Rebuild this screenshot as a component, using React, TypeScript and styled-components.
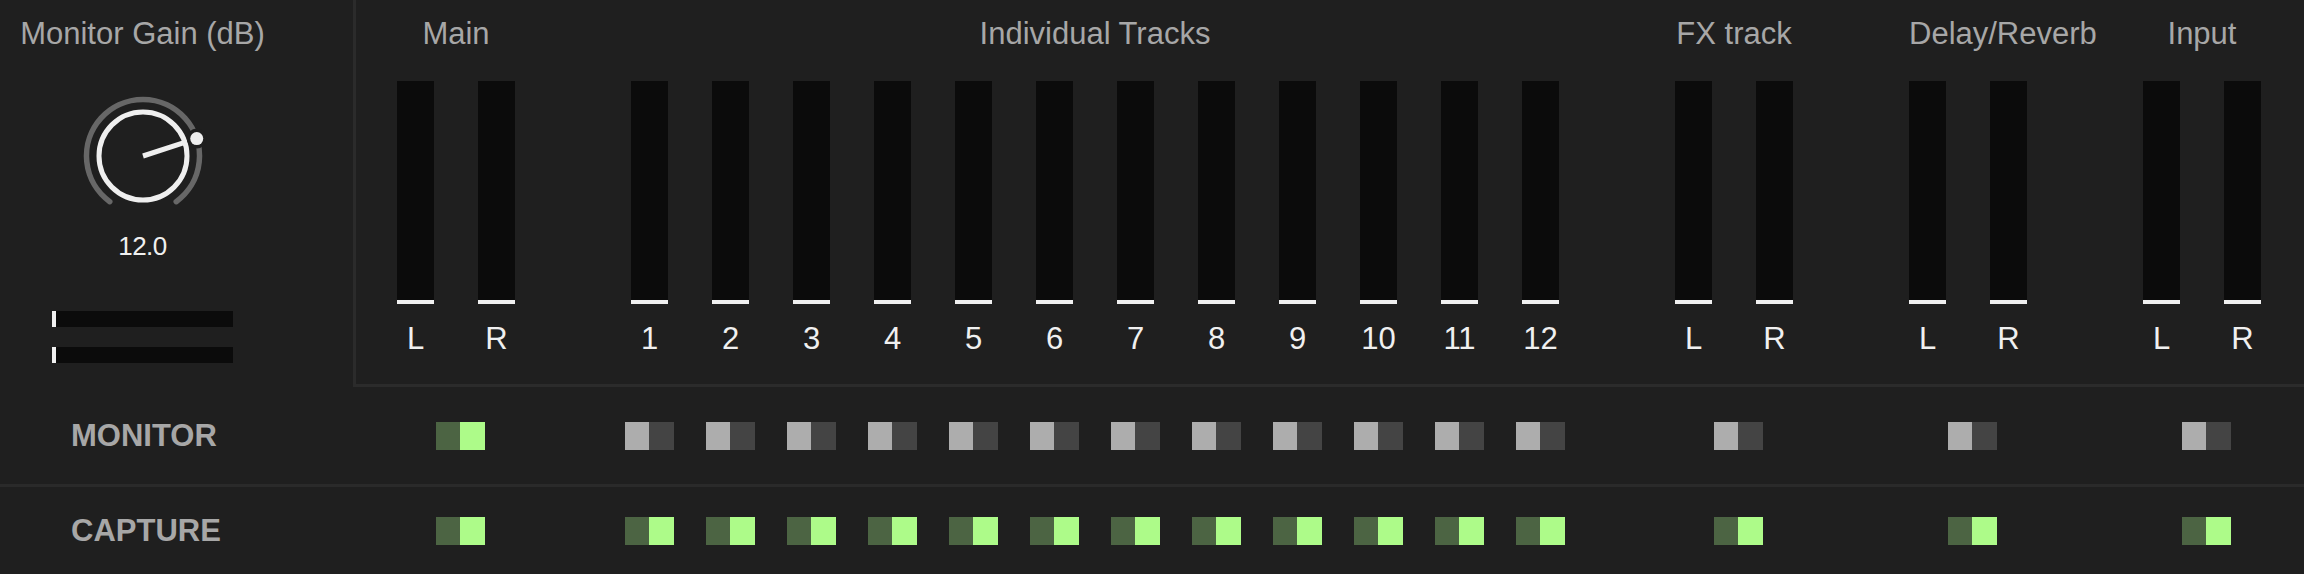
import React from 'react';
import styled, { createGlobalStyle } from 'styled-components';

const GlobalStyle = createGlobalStyle`
  html, body {
    margin: 0;
    padding: 0;
    background: #1f1f1f;
  }
  body {
    font-family: 'Liberation Sans', Arial, sans-serif;
    overflow: hidden;
  }
`;

const Page = styled.div`
  width: 2304px;
  height: 574px;
  display: flex;
  flex-direction: column;
  background: #1f1f1f;
`;

const Top = styled.div`
  display: flex;
  height: 387px;
  flex-shrink: 0;
`;

const LeftColumn = styled.div`
  width: 353px;
  padding: 16px 68px 0 0;
  box-sizing: border-box;
  display: flex;
  flex-direction: column;
  align-items: center;
`;

const Title = styled.div`
  font-size: 31px;
  line-height: 36px;
  color: #a7a7a7;
  white-space: nowrap;
`;

const KnobSvg = styled.svg`
  display: block;
  margin-top: 39px;
`;

const KnobValue = styled.div`
  margin-top: 11px;
  font-size: 26px;
  line-height: 29px;
  letter-spacing: -0.5px;
  color: #f0f0f0;
`;

const HMeters = styled.div`
  margin-top: 50px;
  display: flex;
  flex-direction: column;
  gap: 20px;
`;

const HMeter = styled.div`
  width: 181px;
  height: 16px;
  box-sizing: border-box;
  background: #0b0b0b;
  border-left: 4px solid #f0f0f0;
`;

const Panel = styled.div`
  flex: 1;
  border-left: 3px solid #2b2b2b;
  border-bottom: 3px solid #2b2b2b;
  padding: 16px 0 0 41px;
  display: flex;
  gap: 116px;
`;

const Group = styled.div`
  display: flex;
  flex-direction: column;
`;

const GroupTitle = styled(Title)`
  width: 0;
  min-width: 100%;
  text-align: center;
`;

const Channels = styled.div`
  display: flex;
  gap: 44px;
`;

const Channel = styled.div`
  width: 37px;
  display: flex;
  flex-direction: column;
  align-items: center;
`;

const MeterBar = styled.div`
  margin-top: 29px;
  width: 37px;
  height: 223px;
  box-sizing: border-box;
  background: #0b0b0b;
  border-bottom: 4px solid #f0f0f0;
`;

const ChannelLabel = styled.div`
  margin-top: 17px;
  font-size: 31px;
  line-height: 36px;
  color: #f0f0f0;
`;

const Row = styled.div<{ $divider?: boolean }>`
  display: flex;
  align-items: center;
  height: ${({ $divider }) => ($divider ? '97px' : 'auto')};
  flex: ${({ $divider }) => ($divider ? '0 0 auto' : '1')};
  border-bottom: ${({ $divider }) => ($divider ? '3px solid #2a2a2a' : 'none')};
`;

const RowLabel = styled.div`
  width: 397px;
  flex-shrink: 0;
  padding-left: 71px;
  box-sizing: border-box;
  font-size: 31px;
  line-height: 36px;
  font-weight: bold;
  color: #a7a7a7;
`;

const RowGroups = styled.div`
  display: flex;
  gap: 116px;
`;

const StereoCell = styled.div`
  width: 118px;
  padding-left: 9px;
  box-sizing: border-box;
  display: flex;
  justify-content: center;
`;

const TrackCells = styled.div`
  display: flex;
  gap: 44px;
`;

const TrackCell = styled.div`
  width: 37px;
  display: flex;
  justify-content: center;
`;

const Toggle = styled.div`
  display: flex;
  height: 28px;
  flex-shrink: 0;
`;

const ToggleHalf = styled.div<{ $w: number; $color: string }>`
  width: ${({ $w }) => $w}px;
  height: 100%;
  background: ${({ $color }) => $color};
`;

type GroupDef = { title: string; channels: string[]; stereo: boolean };

const groups: GroupDef[] = [
  { title: 'Main', channels: ['L', 'R'], stereo: true },
  {
    title: 'Individual Tracks',
    channels: Array.from({ length: 12 }, (_, i) => String(i + 1)),
    stereo: false,
  },
  { title: 'FX track', channels: ['L', 'R'], stereo: true },
  { title: 'Delay/Reverb', channels: ['L', 'R'], stereo: true },
  { title: 'Input', channels: ['L', 'R'], stereo: true },
];

const ToggleSwitch: React.FC<{ on: boolean }> = ({ on }) => (
  <Toggle>
    <ToggleHalf $w={24} $color={on ? '#4c6443' : '#adadad'} />
    <ToggleHalf $w={25} $color={on ? '#adfb89' : '#444444'} />
  </Toggle>
);

const Knob: React.FC<{ angle: number }> = ({ angle }) => {
  const c = 65;
  const rArc = 56.5;
  const rIn = 44;
  const pt = (r: number, a: number) => {
    const rad = (a * Math.PI) / 180;
    return [c + r * Math.sin(rad), c - r * Math.cos(rad)];
  };
  const [sx, sy] = pt(rArc, -144);
  const [ex, ey] = pt(rArc, 144);
  const [dx, dy] = pt(rArc, angle);
  const [px, py] = pt(rIn, angle);
  return (
    <KnobSvg width="130" height="130" viewBox="0 0 130 130">
      <path
        d={`M ${sx} ${sy} A ${rArc} ${rArc} 0 1 1 ${ex} ${ey}`}
        fill="none"
        stroke="#676767"
        strokeWidth="5.5"
        strokeLinecap="round"
      />
      <circle cx={c} cy={c} r={rIn} fill="none" stroke="#efefef" strokeWidth="5" />
      <line x1={c} y1={c} x2={px} y2={py} stroke="#efefef" strokeWidth="5" />
      <circle cx={dx} cy={dy} r="10" fill="#1f1f1f" />
      <circle cx={dx} cy={dy} r="6.5" fill="#efefef" />
    </KnobSvg>
  );
};

const ToggleRow: React.FC<{ label: string; onFor: (g: GroupDef) => boolean; divider?: boolean }> = ({
  label,
  onFor,
  divider,
}) => (
  <Row $divider={divider}>
    <RowLabel>{label}</RowLabel>
    <RowGroups>
      {groups.map((g) =>
        g.stereo ? (
          <StereoCell key={g.title}>
            <ToggleSwitch on={onFor(g)} />
          </StereoCell>
        ) : (
          <TrackCells key={g.title}>
            {g.channels.map((ch) => (
              <TrackCell key={ch}>
                <ToggleSwitch on={onFor(g)} />
              </TrackCell>
            ))}
          </TrackCells>
        )
      )}
    </RowGroups>
  </Row>
);

const App: React.FC = () => {
  return (
    <>
      <GlobalStyle />
      <Page>
        <Top>
          <LeftColumn>
            <Title>Monitor Gain (dB)</Title>
            <Knob angle={72} />
            <KnobValue>12.0</KnobValue>
            <HMeters>
              <HMeter />
              <HMeter />
            </HMeters>
          </LeftColumn>
          <Panel>
            {groups.map((g) => (
              <Group key={g.title}>
                <GroupTitle>{g.title}</GroupTitle>
                <Channels>
                  {g.channels.map((ch) => (
                    <Channel key={ch}>
                      <MeterBar />
                      <ChannelLabel>{ch}</ChannelLabel>
                    </Channel>
                  ))}
                </Channels>
              </Group>
            ))}
          </Panel>
        </Top>
        <ToggleRow label="MONITOR" divider onFor={(g) => g.title === 'Main'} />
        <ToggleRow label="CAPTURE" onFor={() => true} />
      </Page>
    </>
  );
};

export default App;
